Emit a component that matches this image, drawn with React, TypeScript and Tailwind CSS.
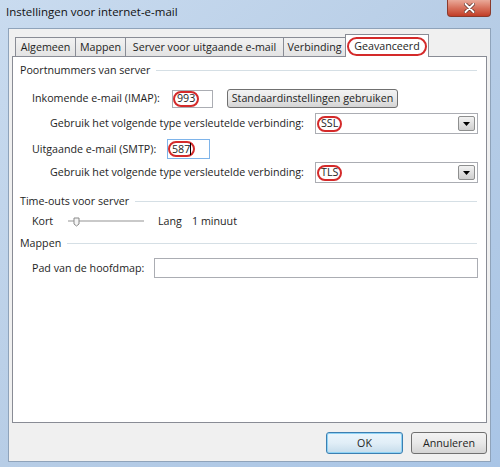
import React from "react";

const font = { fontFamily: '"Open Sans", "Noto Sans", sans-serif' };

function Oval({ children }: { children: React.ReactNode }) {
  return (
    <span className="inline-flex items-center rounded-full border-2 border-[#d42a2a] px-[2px] leading-none h-[16px]">
      {children}
    </span>
  );
}

function GroupHeader({ label, className = "" }: { label: string; className?: string }) {
  return (
    <div className={`flex items-center h-[14px] pl-[7px] pr-[9px] gap-[6px] ${className}`}>
      <span className="whitespace-nowrap">{label}</span>
      <div className="flex-1 h-px bg-[#d5dfe5]" />
    </div>
  );
}

function Select({ value }: { value: string }) {
  return (
    <div className="w-[163px] h-[21px] border border-[#abadb3] bg-white flex items-center justify-between pl-[1px] pr-[2px]">
      <Oval>{value}</Oval>
      <div className="w-[17px] h-[15px] border border-[#8e8f8f] rounded-[2px] bg-gradient-to-b from-[#f2f2f2] to-[#cfcfcf] flex items-center justify-center">
        <svg width="7" height="4" viewBox="0 0 7 4">
          <path d="M0 0 H7 L3.5 4 Z" fill="#000" />
        </svg>
      </div>
    </div>
  );
}

function Tab({ label, w }: { label: string; w: string }) {
  return (
    <div className={`${w} h-[19px] border border-b-0 border-[#898c95] bg-gradient-to-b from-[#f2f2f2] to-[#e3e3e3] flex items-center justify-center -mr-px`}>
      {label}
    </div>
  );
}

export default function App() {
  return (
    <div
      className="w-[500px] h-[467px] flex flex-col bg-gradient-to-br from-[#c9dbef] via-[#b7cde6] to-[#a9c5e6] text-[#1e1e1e] text-[10.7px] overflow-hidden"
      style={font}
    >
      {/* Title bar */}
      <div className="h-[28px] flex justify-between shrink-0">
        <div className="pl-[6px] pt-[3px] text-[11.5px] text-[#111]">Instellingen voor internet-e-mail</div>
        <div className="mr-[9px] w-[44px] h-[17px] rounded-b-[4px] border border-t-0 border-[#8a3a2c] bg-gradient-to-b from-[#e9a999] via-[#d7715c] to-[#c13c26] flex items-center justify-center">
          <svg width="11" height="10" viewBox="0 0 11 10">
            <path d="M1.5 1 L9.5 9 M9.5 1 L1.5 9" stroke="#5a2a22" strokeWidth="3.4" strokeLinecap="round" />
            <path d="M1.5 1 L9.5 9 M9.5 1 L1.5 9" stroke="#fff" strokeWidth="2" strokeLinecap="round" />
          </svg>
        </div>
      </div>

      {/* Client area */}
      <div className="ml-[8px] mr-[9px] h-[434px] bg-[#f0f0f0] border border-[#8fa3ba] flex flex-col px-[3px]">
        {/* Tabs */}
        <div className="h-[27px] flex items-end pl-[3px]">
          <Tab label="Algemeen" w="w-[61px]" />
          <Tab label="Mappen" w="w-[51px]" />
          <Tab label="Server voor uitgaande e-mail" w="w-[159px]" />
          <Tab label="Verbinding" w="w-[63px]" />
          <div className="relative z-10 w-[84px] h-[23px] -mb-px border border-b-0 border-[#898c95] bg-white flex items-center justify-center">
            <span className="inline-flex items-center rounded-full border-2 border-[#d42a2a] px-[5px] h-[19px]">
              Geavanceerd
            </span>
          </div>
        </div>

        {/* Panel */}
        <div className="h-[367px] border border-[#898c95] bg-white flex flex-col">
          <GroupHeader label="Poortnummers van server" className="mt-[6px]" />

          <div className="mt-[12px] h-[19px] flex items-center pl-[19px]">
            <div className="w-[140px] whitespace-nowrap">Inkomende e-mail (IMAP):</div>
            <div className="w-[41px] h-[18px] border border-[#abadb3] flex items-center">
              <Oval>993</Oval>
            </div>
            <div className="ml-[14px] w-[171px] h-[19px] border border-[#707070] rounded-[3px] bg-gradient-to-b from-[#f3f3f3] via-[#e8e8e8] to-[#d4d4d4] flex items-center justify-center">
              Standaardinstellingen gebruiken
            </div>
          </div>

          <div className="mt-[5px] h-[21px] flex items-center pl-[37px]">
            <div className="w-[265px] whitespace-nowrap">Gebruik het volgende type versleutelde verbinding:</div>
            <Select value="SSL" />
          </div>

          <div className="mt-[5px] h-[20px] flex items-center pl-[19px]">
            <div className="w-[135px] whitespace-nowrap">Uitgaande e-mail (SMTP):</div>
            <div className="w-[43px] h-[20px] border border-[#7eb4ea] flex items-center">
              <Oval>
                587<span className="w-px h-[12px] bg-black" />
              </Oval>
            </div>
          </div>

          <div className="mt-[3px] h-[21px] flex items-center pl-[37px]">
            <div className="w-[265px] whitespace-nowrap">Gebruik het volgende type versleutelde verbinding:</div>
            <Select value="TLS" />
          </div>

          <GroupHeader label="Time-outs voor server" className="mt-[11px]" />

          <div className="mt-[6px] h-[14px] flex items-center pl-[19px]">
            <div className="w-[30px]">Kort</div>
            <svg width="96" height="14" viewBox="0 0 96 14">
              <line x1="6" y1="7" x2="82" y2="7" stroke="#c9c9c9" strokeWidth="2" />
              <path d="M12 4 H17 V10 L14.5 12 L12 10 Z" fill="#f4f4f4" stroke="#8a8a8a" strokeWidth="1" />
            </svg>
            <div className="w-[34px]">Lang</div>
            <div>1 minuut</div>
          </div>

          <GroupHeader label="Mappen" className="mt-[8px]" />

          <div className="mt-[8px] h-[20px] flex items-center pl-[19px]">
            <div className="w-[122px] whitespace-nowrap">Pad van de hoofdmap:</div>
            <div className="w-[324px] h-[20px] border border-[#abadb3]" />
          </div>
        </div>

        {/* Buttons */}
        <div className="mt-[9px] flex justify-end gap-[8px]">
          <div className="w-[77px] h-[22px] rounded-[3px] border border-[#3c7fb1] bg-gradient-to-b from-[#eaf6fd] via-[#e1eef7] to-[#c5dceb] shadow-[inset_0_0_0_1px_#8fd3f5] flex items-center justify-center">
            OK
          </div>
          <div className="w-[76px] h-[22px] rounded-[3px] border border-[#707070] bg-gradient-to-b from-[#f3f3f3] via-[#e8e8e8] to-[#d4d4d4] flex items-center justify-center">
            Annuleren
          </div>
        </div>
      </div>
    </div>
  );
}
